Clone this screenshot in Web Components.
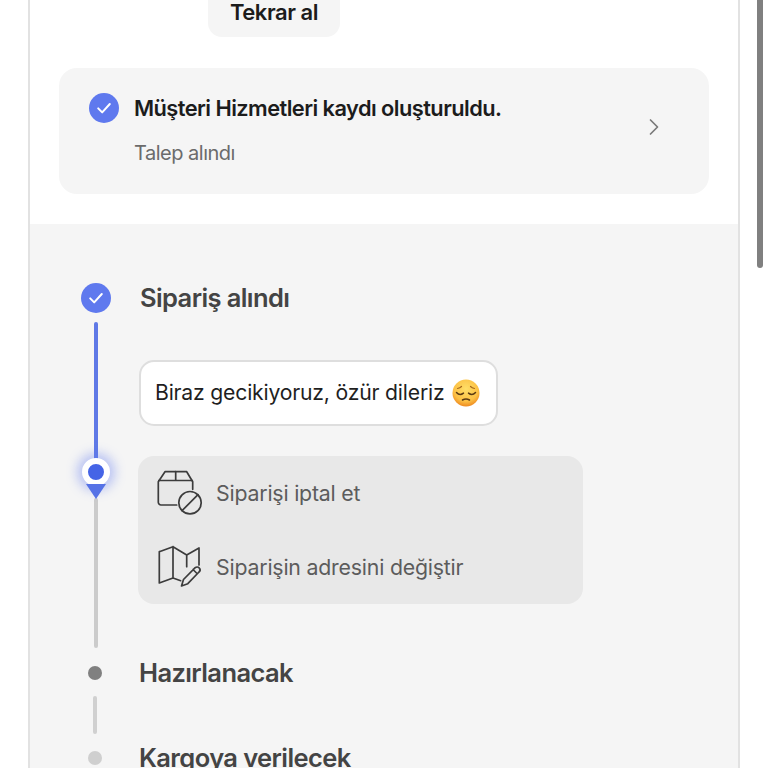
<!DOCTYPE html>
<html lang="tr">
<head>
<meta charset="utf-8">
<title>Sipariş</title>
<style>
  html, body { margin: 0; height: 768px; overflow: hidden; background: #fff; }
  body { font-family: Inter, "Noto Sans", sans-serif; }
</style>
</head>
<body>
<order-page>
  <repeat-button>Tekrar al</repeat-button>
  <notice-card title-text="Müşteri Hizmetleri kaydı oluşturuldu." sub-text="Talep alındı"></notice-card>
  <order-track>
    <track-head state="done">Sipariş alındı</track-head>
    <track-now>
      <delay-bubble>Biraz gecikiyoruz, özür dileriz</delay-bubble>
      <action-panel>
        <action-row icon="cancel">Siparişi iptal et</action-row>
        <action-row icon="map">Siparişin adresini değiştir</action-row>
      </action-panel>
    </track-now>
    <track-head state="next">Hazırlanacak</track-head>
    <track-gap></track-gap>
    <track-head state="later">Kargoya verilecek</track-head>
  </order-track>
</order-page>

<script>
const CHECK_ICON = `<svg viewBox="0 0 30 30" width="30" height="30"><circle cx="15" cy="15" r="15" fill="#5f79ee"/><path d="M9.2 15.4l4 4 7.6-8.4" fill="none" stroke="#fff" stroke-width="2" stroke-linecap="round" stroke-linejoin="round"/></svg>`;

class OrderPage extends HTMLElement {
  constructor() {
    super();
    this.attachShadow({ mode: 'open' });
    this.shadowRoot.innerHTML = `
      <style>
        :host { display: block; height: 768px; overflow: hidden; position: relative; }
        #frame {
          box-sizing: border-box;
          width: 712px;
          margin-left: 28px;
          height: 900px;
          margin-top: -20px;
          border-left: 2px solid #e2e2e2;
          border-right: 2px solid #e2e2e2;
          background: #fff;
        }
        #bar {
          position: absolute;
          left: 757px;
          top: 0;
          width: 6px;
          height: 268px;
          border-radius: 0 0 3px 3px;
          background: #808080;
        }
      </style>
      <div id="frame"><slot></slot></div>
      <div id="bar"></div>
    `;
  }
}

class RepeatButton extends HTMLElement {
  constructor() {
    super();
    this.attachShadow({ mode: 'open' });
    this.shadowRoot.innerHTML = `
      <style>
        :host {
          display: flex;
          width: 132px;
          height: 57px;
          margin-left: 178px;
          box-sizing: border-box;
          padding-top: 7px;
          align-items: center;
          justify-content: center;
          background: #f5f5f5;
          border-radius: 0 0 14px 14px;
          color: #1c1c1c;
          font-size: 22px;
          font-weight: 600;
          letter-spacing: -0.45px;
        }
      </style>
      <slot></slot>
    `;
  }
}

class NoticeCard extends HTMLElement {
  constructor() {
    super();
    this.attachShadow({ mode: 'open' });
    this.shadowRoot.innerHTML = `
      <style>
        :host {
          display: flex;
          align-items: center;
          box-sizing: border-box;
          width: 650px;
          height: 126px;
          margin: 31px 0 30px 29px;
          padding: 0 49px 0 30px;
          background: #f5f5f5;
          border-radius: 18px;
        }
        #icon { flex: none; width: 30px; height: 30px; margin: -47px 15px 0 0; }
        #icon svg { display: block; }
        #text { flex: 1; margin-top: -1px; }
        #title { margin-top: -1px; font-size: 21.8px; line-height: 30px; font-weight: 600; color: #1c1c1c; letter-spacing: -0.55px; }
        #sub { margin-top: 15px; font-size: 20px; line-height: 30px; color: #6b6b6b; letter-spacing: -0.5px; }
        #chev { flex: none; display: block; margin-top: -8px; }
      </style>
      <div id="icon">${CHECK_ICON}</div>
      <div id="text">
        <div id="title"></div>
        <div id="sub"></div>
      </div>
      <svg id="chev" viewBox="0 0 12 18" width="12" height="18"><path d="M2.5 2l7 7-7 7" fill="none" stroke="#7a7a7a" stroke-width="1.7" stroke-linecap="round" stroke-linejoin="round"/></svg>
    `;
  }
  connectedCallback() {
    this.shadowRoot.querySelector('#title').textContent = this.getAttribute('title-text');
    this.shadowRoot.querySelector('#sub').textContent = this.getAttribute('sub-text');
  }
}

class OrderTrack extends HTMLElement {
  constructor() {
    super();
    this.attachShadow({ mode: 'open' });
    this.shadowRoot.innerHTML = `
      <style>
        :host {
          display: block;
          background: #f5f5f5;
          padding: 59px 0 0 50px;
          height: 700px;
        }
      </style>
      <slot></slot>
    `;
  }
}

class TrackHead extends HTMLElement {
  constructor() {
    super();
    this.attachShadow({ mode: 'open' });
    this.shadowRoot.innerHTML = `
      <style>
        :host {
          display: flex;
          align-items: center;
          height: 30px;
          color: #444;
          font-size: 25.5px;
          font-weight: 600;
          letter-spacing: -0.6px;
        }
        #mark { flex: none; width: 30px; display: flex; justify-content: center; margin-right: 30px; }
        #mark svg { display: block; flex: none; margin-left: 2px; }
        #label { margin-top: -2px; }
        .dot { width: 14px; height: 14px; border-radius: 50%; background: #808080; }
        :host([state="later"]) .dot { background: #cfcfcf; }
        :host(:not([state="done"])) #label { margin-left: -1px; }
      </style>
      <div id="mark"></div>
      <div id="label"><slot></slot></div>
    `;
  }
  connectedCallback() {
    const mark = this.shadowRoot.querySelector('#mark');
    if (this.getAttribute('state') === 'done') {
      mark.innerHTML = CHECK_ICON;
    } else {
      mark.innerHTML = '<div class="dot"></div>';
    }
  }
}

class TrackNow extends HTMLElement {
  constructor() {
    super();
    this.attachShadow({ mode: 'open' });
    this.shadowRoot.innerHTML = `
      <style>
        :host { display: flex; margin: 9px 0 10px; }
        #rail {
          flex: none;
          width: 30px;
          margin-right: 28px;
          padding-left: 2px;
          box-sizing: border-box;
          display: flex;
          flex-direction: column;
          align-items: center;
        }
        .line { width: 4px; border-radius: 2px; }
        #blue { height: 138px; background: #5f79e6; }
        #gray { height: 150px; background: #cbcbcb; }
        #pin { position: relative; width: 28px; height: 40px; margin-top: -2px; flex: none; z-index: 1; }
        #ring {
          box-sizing: border-box;
          width: 28px;
          height: 28px;
          border-radius: 50%;
          background: #4564e6;
          border: 6px solid #fff;
          box-shadow: 0 0 11px 5px rgba(95, 121, 240, .4);
        }
        #tip {
          position: absolute;
          left: 4px;
          top: 26px;
          width: 0;
          height: 0;
          border-left: 10px solid transparent;
          border-right: 10px solid transparent;
          border-top: 15px solid #5672e6;
        }
        #body { padding-top: 38px; }
      </style>
      <div id="rail">
        <div class="line" id="blue"></div>
        <div id="pin"><div id="ring"></div><div id="tip"></div></div>
        <div class="line" id="gray"></div>
      </div>
      <div id="body"><slot></slot></div>
    `;
  }
}

class DelayBubble extends HTMLElement {
  constructor() {
    super();
    this.attachShadow({ mode: 'open' });
    this.shadowRoot.innerHTML = `
      <style>
        :host {
          display: flex;
          align-items: center;
          box-sizing: border-box;
          width: 359px;
          height: 66px;
          margin-left: 1px;
          padding: 0 16px 0 14px;
          background: #fff;
          border: 2px solid #dedede;
          border-radius: 15px;
          color: #1f1f1f;
          font-size: 21.2px;
          letter-spacing: -0.2px;
          white-space: nowrap;
        }
        #text { margin-top: -2px; }
        svg { display: block; margin-left: 8px; flex: none; }
      </style>
      <div id="text"><slot></slot></div>
      <svg viewBox="0 0 28 28" width="28" height="28">
        <defs>
          <radialGradient id="face" cx="50%" cy="35%" r="65%">
            <stop offset="0" stop-color="#ffdf68"/>
            <stop offset=".7" stop-color="#fcc044"/>
            <stop offset="1" stop-color="#ee8a20"/>
          </radialGradient>
        </defs>
        <circle cx="14" cy="14" r="13.5" fill="url(#face)"/>
        <path d="M4.500 13.500c2 2.200 4.800 2.300 7 .6M16.500 14.100c2.200 1.700 5 1.600 7-.6" fill="none" stroke="#5b3a12" stroke-width="1.5" stroke-linecap="round"/>
        <path d="M5.500 9.500c1.500-.3 3-1 4-2M22.500 9.500c-1.500-.3-3-1-4-2" fill="none" stroke="#a5671c" stroke-width="1.200" stroke-linecap="round"/>
        <path d="M10.500 21c2-1.200 5-1.200 7 0" fill="none" stroke="#5b3a12" stroke-width="1.500" stroke-linecap="round"/>
      </svg>
    `;
  }
}

class ActionPanel extends HTMLElement {
  constructor() {
    super();
    this.attachShadow({ mode: 'open' });
    this.shadowRoot.innerHTML = `
      <style>
        :host {
          display: block;
          width: 445px;
          height: 148px;
          margin-top: 30px;
          background: #e8e8e8;
          border-radius: 16px;
        }
      </style>
      <slot></slot>
    `;
  }
}

const ACTION_ICONS = {
  cancel: `<svg viewBox="0 0 46 46" width="46" height="46" fill="none" stroke="#3c3c3c" stroke-width="1.700" stroke-linecap="round" stroke-linejoin="round">
    <path d="M19.700 35H4a2.700 2.700 0 0 1-2.700-2.700V11.700L8 1.700h21.700l6 10v7.600"/>
    <path d="M1.800 10.500h33.500M18.700 1.700v8.800"/>
    <circle cx="33" cy="32.700" r="11.200"/>
    <path d="M25 40.700l16-16"/>
  </svg>`,
  map: `<svg viewBox="0 0 46 46" width="46" height="46" fill="none" stroke="#3c3c3c" stroke-width="1.700" stroke-linecap="round" stroke-linejoin="round">
    <path d="M2.300 7.700V39L16 34l7.700 2.700M2.300 7.700L16 2.700 29.700 11 42 4v17M16 2.700V34M29.700 11v11.700"/>
    <path d="M26.500 35.500l-2 6.500 6.300-2.300L42 28a2.600 2.600 0 0 0-3.800-4.300zM36 25.500l4 4"/>
  </svg>`
};

class ActionRow extends HTMLElement {
  constructor() {
    super();
    this.attachShadow({ mode: 'open' });
    this.shadowRoot.innerHTML = `
      <style>
        :host {
          display: flex;
          align-items: center;
          height: 74px;
          padding-left: 19px;
          color: #5c5c5c;
          font-size: 21.300px;
          letter-spacing: -0.2px;
        }
        #icon { flex: none; width: 46px; height: 46px; margin-right: 13px; }
        #icon svg { display: block; }
      </style>
      <div id="icon"></div>
      <slot></slot>
    `;
  }
  connectedCallback() {
    this.shadowRoot.querySelector('#icon').innerHTML = ACTION_ICONS[this.getAttribute('icon')];
  }
}

class TrackGap extends HTMLElement {
  constructor() {
    super();
    this.attachShadow({ mode: 'open' });
    this.shadowRoot.innerHTML = `
      <style>
        :host { display: block; width: 30px; padding: 8px 0 9px; box-sizing: border-box; margin: 0; }
        div { width: 4px; height: 38px; margin-left: 13px; border-radius: 2px; background: #d0d0d0; }
      </style>
      <div></div>
    `;
  }
}

customElements.define('order-page', OrderPage);
customElements.define('repeat-button', RepeatButton);
customElements.define('notice-card', NoticeCard);
customElements.define('order-track', OrderTrack);
customElements.define('track-head', TrackHead);
customElements.define('track-now', TrackNow);
customElements.define('delay-bubble', DelayBubble);
customElements.define('action-panel', ActionPanel);
customElements.define('action-row', ActionRow);
customElements.define('track-gap', TrackGap);
</script>
</body>
</html>
